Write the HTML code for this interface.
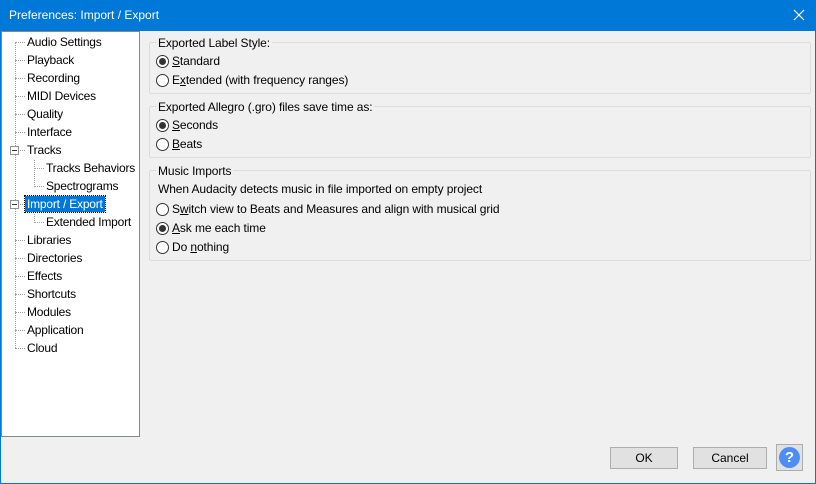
<!DOCTYPE html><html><head><style>
*{margin:0;padding:0;box-sizing:border-box}
body{width:816px;height:484px;background:#0078d7;font:12px "Liberation Sans",sans-serif;color:#000;position:relative;overflow:hidden}
.a{position:absolute}
#c{left:1px;top:31px;width:814px;height:452px;background:#f0f0f0}
#t{left:1px;top:31px;width:139px;height:406px;background:#fff;border:1px solid #828790}
#w{left:0;top:0;width:816px;height:484px}
.ti{position:absolute;white-space:nowrap;line-height:16px;letter-spacing:-0.2px}
.dv{position:absolute;border-left:1px dotted #a0a0a0}
.dh{position:absolute;border-top:1px dotted #a0a0a0;height:0}
.g{position:absolute;border:1px solid #dcdcdc;border-radius:2px}
.gl{position:absolute;background:#f0f0f0;padding:0 2px;line-height:14px;white-space:nowrap;letter-spacing:-0.1px}
.r{position:absolute;width:13px;height:13px;border:1px solid #333;border-radius:50%;background:#fff}
.r.on::after{content:"";position:absolute;left:2px;top:2px;width:7px;height:7px;border-radius:50%;background:#333}
.rt{position:absolute;line-height:14px;white-space:nowrap;letter-spacing:-0.1px}
.b{position:absolute;border:1px solid #adadad;background:#e1e1e1;text-align:center;line-height:20px}
.pm{position:absolute;width:9px;height:9px;border:1px solid #919191;background:#fff}
.pm::after{content:"";position:absolute;left:1px;top:3px;width:5px;height:1px;background:#333}
</style></head><body>
<div class="a" style="left:9px;top:8px;color:#fff;font-size:12px">Preferences: Import / Export</div>
<svg class="a" style="left:793px;top:9px" width="12" height="12"><path d="M1 1L11 11M11 1L1 11" stroke="#fff" stroke-width="1.2"/></svg>
<div id="c" class="a"></div>
<div id="t" class="a">
<div class="dv" style="left:13px;top:10px;height:306px"></div>
<div class="dv" style="left:32px;top:128px;height:27px"></div>
<div class="dv" style="left:32px;top:182px;height:9px"></div>
</div>
<div class="a" id="w">
<div class="dh" style="left:15px;top:42px;width:10px"></div>
<div class="dh" style="left:15px;top:60px;width:10px"></div>
<div class="dh" style="left:15px;top:78px;width:10px"></div>
<div class="dh" style="left:15px;top:96px;width:10px"></div>
<div class="dh" style="left:15px;top:114px;width:10px"></div>
<div class="dh" style="left:15px;top:132px;width:10px"></div>
<div class="dh" style="left:15px;top:150px;width:10px"></div>
<div class="dh" style="left:34px;top:168px;width:10px"></div>
<div class="dh" style="left:34px;top:186px;width:10px"></div>
<div class="dh" style="left:15px;top:204px;width:10px"></div>
<div class="dh" style="left:34px;top:222px;width:10px"></div>
<div class="dh" style="left:15px;top:240px;width:10px"></div>
<div class="dh" style="left:15px;top:258px;width:10px"></div>
<div class="dh" style="left:15px;top:276px;width:10px"></div>
<div class="dh" style="left:15px;top:294px;width:10px"></div>
<div class="dh" style="left:15px;top:312px;width:10px"></div>
<div class="dh" style="left:15px;top:330px;width:10px"></div>
<div class="dh" style="left:15px;top:348px;width:10px"></div>
<div class="pm" style="left:10px;top:146px"></div>
<div class="pm" style="left:10px;top:200px"></div>
<div class="ti" style="left:27px;top:34px">Audio Settings</div>
<div class="ti" style="left:27px;top:52px">Playback</div>
<div class="ti" style="left:27px;top:70px">Recording</div>
<div class="ti" style="left:27px;top:88px">MIDI Devices</div>
<div class="ti" style="left:27px;top:106px">Quality</div>
<div class="ti" style="left:27px;top:124px">Interface</div>
<div class="ti" style="left:27px;top:142px">Tracks</div>
<div class="ti" style="left:46px;top:160px">Tracks Behaviors</div>
<div class="ti" style="left:46px;top:178px">Spectrograms</div>
<div class="ti" style="left:25px;top:196px;background:#0078d7;color:#fff;padding:0 2px;outline:1px dotted #000">Import / Export</div>
<div class="ti" style="left:46px;top:214px">Extended Import</div>
<div class="ti" style="left:27px;top:232px">Libraries</div>
<div class="ti" style="left:27px;top:250px">Directories</div>
<div class="ti" style="left:27px;top:268px">Effects</div>
<div class="ti" style="left:27px;top:286px">Shortcuts</div>
<div class="ti" style="left:27px;top:304px">Modules</div>
<div class="ti" style="left:27px;top:322px">Application</div>
<div class="ti" style="left:27px;top:340px">Cloud</div>

<div class="g" style="left:149px;top:42px;width:662px;height:52px"></div>
<div class="gl" style="left:156px;top:36px">Exported Label Style:</div>
<div class="r on" style="left:156px;top:55px"></div><div class="rt" style="left:172px;top:54px"><u>S</u>tandard</div>
<div class="r" style="left:156px;top:74px"></div><div class="rt" style="left:172px;top:73px">E<u>x</u>tended (with frequency ranges)</div>

<div class="g" style="left:149px;top:106px;width:662px;height:52px"></div>
<div class="gl" style="left:156px;top:100px">Exported Allegro (.gro) files save time as:</div>
<div class="r on" style="left:156px;top:119px"></div><div class="rt" style="left:172px;top:118px"><u>S</u>econds</div>
<div class="r" style="left:156px;top:138px"></div><div class="rt" style="left:172px;top:137px"><u>B</u>eats</div>

<div class="g" style="left:149px;top:170px;width:662px;height:91px"></div>
<div class="gl" style="left:156px;top:164px">Music Imports</div>
<div class="rt" style="left:158px;top:182px">When Audacity detects music in file imported on empty project</div>
<div class="r" style="left:156px;top:203px"></div><div class="rt" style="left:172px;top:202px">S<u>w</u>itch view to Beats and Measures and align with musical grid</div>
<div class="r on" style="left:156px;top:222px"></div><div class="rt" style="left:172px;top:221px"><u>A</u>sk me each time</div>
<div class="r" style="left:156px;top:241px"></div><div class="rt" style="left:172px;top:240px">Do <u>n</u>othing</div>

<div class="b" style="left:610px;top:447px;width:68px;height:22px">OK</div>
<div class="b" style="left:693px;top:447px;width:74px;height:22px">Cancel</div>
<div class="b" style="left:776px;top:444px;width:27px;height:27px;padding:2px">
<div style="width:21px;height:21px;border-radius:50%;background:#4d8ef5;color:#fff;font-weight:bold;font-size:15px;line-height:21px">?</div></div>
</div>
</body></html>
